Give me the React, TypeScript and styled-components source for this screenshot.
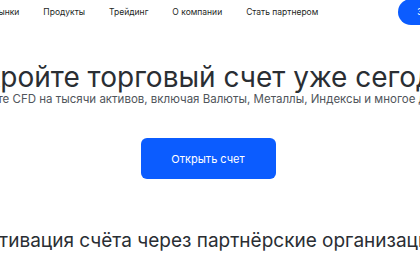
import React from "react";
import styled, { createGlobalStyle } from "styled-components";

const Global = createGlobalStyle`
  html, body { margin: 0; padding: 0; background: #ffffff; overflow: hidden; }
  body { font-family: Inter, "Noto Sans", Arial, sans-serif; -webkit-font-smoothing: antialiased; }
`;

const Page = styled.div`
  width: 416px;
  height: 280px;
  display: flex;
  flex-direction: column;
  align-items: center;
`;

const Header = styled.header`
  width: 416px;
  height: 23px;
  display: flex;
  align-items: center;
  justify-content: flex-start;
  white-space: nowrap;
`;

const Nav = styled.nav`
  display: flex;
  align-items: center;
  gap: 24px;
  margin-left: -7px;
`;

const NavLink = styled.a`
  font-size: 8.5px;
  color: #1c1f23;
  text-decoration: none;
`;

const SignUp = styled.button`
  flex: none;
  border: none;
  background: #0b5cff;
  color: #fff;
  font: 500 8.5px Inter, sans-serif;
  height: 26px;
  padding: 0 16px 0 19px;
  border-radius: 13px;
  margin-left: 80px;
`;

const Title = styled.h1`
  margin: 38px 0 0;
  font-size: 28px;
  font-weight: 400;
  color: #2a2e33;
  white-space: nowrap;
  line-height: 32px;
`;

const Subtitle = styled.p`
  margin: 0;
  font-size: 11.5px;
  color: #50555b;
  white-space: nowrap;
  line-height: 13px;
`;

const OpenButton = styled.button`
  margin-top: 32px;
  width: 135px;
  height: 41px;
  border: none;
  border-radius: 6px;
  background: #0b5cff;
  color: #fff;
  font: 400 11px Inter, sans-serif;
`;

const SectionTitle = styled.h2`
  margin: 50px 0 0;
  font-size: 19px;
  font-weight: 400;
  color: #2a2e33;
  white-space: nowrap;
  line-height: 24px;
`;

export default function App() {
  return (
    <>
      <Global />
      <Page>
        <Header>
          <Nav>
            <NavLink>Рынки</NavLink>
            <NavLink>Продукты</NavLink>
            <NavLink>Трейдинг</NavLink>
            <NavLink>О компании</NavLink>
            <NavLink>Стать партнером</NavLink>
          </Nav>
          <SignUp>Зарегистрироваться</SignUp>
        </Header>
        <Title>Откройте торговый счет уже сегодня</Title>
        <Subtitle>Торгуйте CFD на тысячи активов, включая Валюты, Металлы, Индексы и многое другое</Subtitle>
        <OpenButton>Открыть счет</OpenButton>
        <SectionTitle>Активация счёта через партнёрские организации</SectionTitle>
      </Page>
    </>
  );
}
